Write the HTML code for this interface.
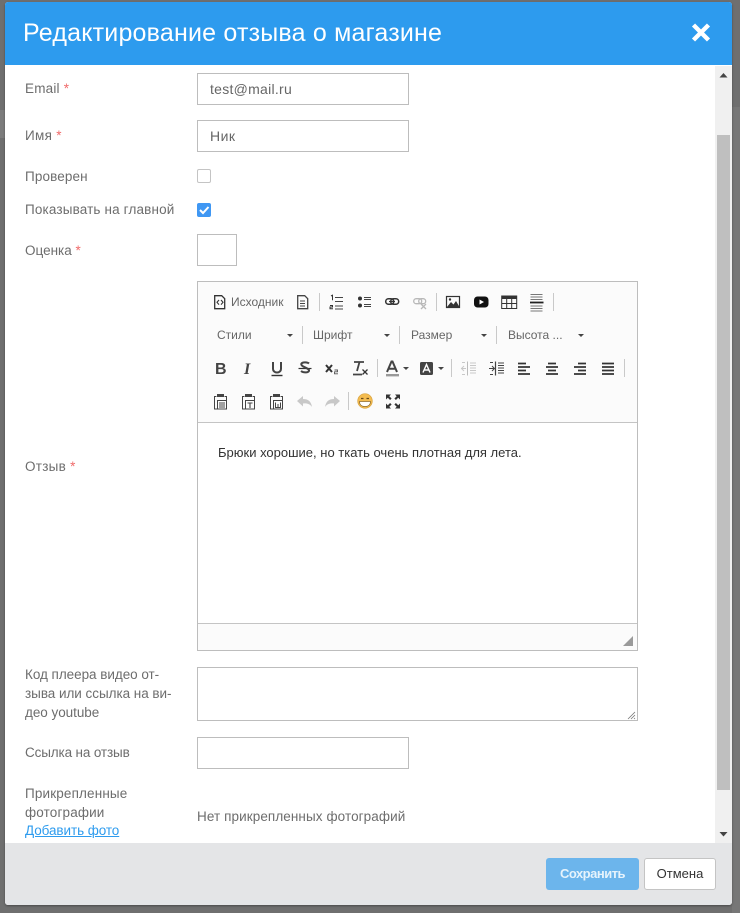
<!DOCTYPE html>
<html lang="ru"><head><meta charset="utf-8"><title>Редактирование отзыва</title>
<style>
html,body{margin:0;padding:0}
body{width:740px;height:913px;overflow:hidden;background:#6f6f6f;position:relative;font-family:"Liberation Sans",sans-serif}
.a{position:absolute}
.t{position:absolute;white-space:nowrap;font-size:13.5px;color:#6d6d6d;letter-spacing:.1px;line-height:18px}
.s{color:#f06a6a}
.i{position:absolute;box-sizing:border-box;background:#fff;border:1px solid #bdbdbd}
.v{position:absolute;white-space:nowrap;font-size:14px;color:#666;line-height:18px}
.c{position:absolute;white-space:nowrap;font-size:12px;color:#666;line-height:14px}
.sep{position:absolute;width:1px;height:18px;background:#c9c9c9}
.ar{position:absolute;width:0;height:0;border-left:3px solid transparent;border-right:3px solid transparent;border-top:3px solid #444}
svg{position:absolute;left:0;top:0}
</style></head><body>
<div class="a" style="left:0;top:110px;width:5px;height:28px;background:#7c7c7c"></div>
<div class="a" style="left:732px;top:107px;width:8px;height:806px;background:#777"></div>

<div class="a" style="left:5px;top:2px;width:727px;height:903px;background:#fff;border-radius:3px;box-shadow:0 1px 2px rgba(0,0,0,.35);overflow:hidden">
  <div class="a" style="left:0;top:0;width:727px;height:63px;background:#2d9bee"></div>
  <div class="a" style="left:0;top:841px;width:727px;height:62px;background:#e4e5e7"></div>
  <div class="a" style="left:710px;top:64px;width:17px;height:777px;background:#f0f0f0"></div>
  <div class="a" style="left:712px;top:133px;width:13px;height:655px;background:#bfbfbf"></div>
</div>
<div class="a" style="left:23px;top:19px;font-size:25px;line-height:28px;color:#fff;white-space:nowrap;letter-spacing:.2px">Редактирование отзыва о магазине</div>

<div class="t" style="left:25px;top:80px;letter-spacing:.2px">Email <span class="s">*</span></div>
<div class="i" style="left:197px;top:73px;width:212px;height:32px"></div>
<div class="v" style="left:210px;top:80px;letter-spacing:.27px">test@mail.ru</div>
<div class="t" style="left:25px;top:127px;letter-spacing:.3px">Имя <span class="s">*</span></div>
<div class="i" style="left:197px;top:120px;width:212px;height:32px"></div>
<div class="v" style="left:210px;top:127px;letter-spacing:.5px">Ник</div>
<div class="t" style="left:25px;top:168px;letter-spacing:.13px">Проверен</div>
<div class="a" style="left:197px;top:169px;width:14px;height:14px;box-sizing:border-box;border:1px solid #c4c4c4;border-radius:2px;background:#fff"></div>
<div class="t" style="left:25px;top:201px;letter-spacing:.15px">Показывать на главной</div>
<div class="a" style="left:197px;top:203px;width:14px;height:14px;border-radius:2px;background:#3f97f3"></div>
<div class="t" style="left:25px;top:242px;letter-spacing:0">Оценка <span class="s">*</span></div>
<div class="i" style="left:197px;top:234px;width:40px;height:32px"></div>
<div class="t" style="left:25px;top:458px;letter-spacing:.26px">Отзыв <span class="s">*</span></div>

<div class="i" style="left:197px;top:281px;width:441px;height:370px"></div>
<div class="a" style="left:198px;top:282px;width:439px;height:140px;background:#fbfbfb"></div>
<div class="a" style="left:198px;top:422px;width:439px;height:1px;background:#c4c4c4"></div>
<div class="a" style="left:198px;top:623px;width:439px;height:1px;background:#c4c4c4"></div>
<div class="a" style="left:198px;top:624px;width:439px;height:26px;background:#fbfbfb"></div>

<div class="c" style="left:231px;top:295px">Исходник</div>
<div class="c" style="left:217px;top:328px">Стили</div>
<div class="c" style="left:313px;top:328px">Шрифт</div>
<div class="c" style="left:411px;top:328px">Размер</div>
<div class="c" style="left:508px;top:328px">Высота ...</div>
<div class="ar" style="left:287px;top:334px"></div>
<div class="ar" style="left:384px;top:334px"></div>
<div class="ar" style="left:481px;top:334px"></div>
<div class="ar" style="left:578px;top:334px"></div>
<div class="ar" style="left:403px;top:367px"></div>
<div class="ar" style="left:438px;top:367px"></div>
<div class="sep" style="left:319px;top:293px"></div>
<div class="sep" style="left:436px;top:293px"></div>
<div class="sep" style="left:553px;top:293px"></div>
<div class="sep" style="left:302px;top:326px"></div>
<div class="sep" style="left:399px;top:326px"></div>
<div class="sep" style="left:496px;top:326px"></div>
<div class="sep" style="left:377px;top:359px"></div>
<div class="sep" style="left:451px;top:359px"></div>
<div class="sep" style="left:624px;top:359px"></div>
<div class="sep" style="left:348px;top:392px"></div>

<svg width="740" height="913" viewBox="0 0 740 913" fill="none">
<path d="M693.500 25l15 15M708.500 25l-15 15" stroke="#fff" stroke-width="4.400"/>
<path d="M719.500 77.500h8l-4-4.500z" fill="#444"/>
<path d="M719.500 832h8l-4 4.500z" fill="#444"/>
<path d="M200 210l3 3 5.500-6" stroke="#fff" stroke-width="2"/>
<g stroke="#333" stroke-width="1.300">
<path d="M214.700 295.700h7l3 3v10h-10z"/><path d="M219 300l-2 2.300 2 2.300M221 300l2 2.300-2 2.300" stroke-width="1.100"/>
<path d="M297.700 295.700h7l3 3v10h-10z" stroke="#444"/><path d="M300 301h5M300 303.500h5M300 306h5" stroke="#444" stroke-width="1"/>
<path d="M335 297.500h8M335 301.500h8M335 306h8M335 309h8" stroke="#444" stroke-width="1"/>
<path d="M331 296l1.500-.8v5" stroke-width="1"/><path d="M330 305.500h2.500v1.500h-2.500v1.800h3" stroke-width="1"/>
<circle cx="360" cy="298.500" r="2" fill="#333" stroke="none"/><circle cx="360" cy="305.500" r="2" fill="#333" stroke="none"/>
<path d="M364 297.500h7M364 299.500h7M364 304.500h7M364 306.500h7" stroke="#444" stroke-width="1"/>
<rect x="385.700" y="298.700" width="8" height="5.600" rx="2.800" stroke="#333" stroke-width="1.500"/><rect x="390.700" y="298.700" width="8" height="5.600" rx="2.800" stroke="#333" stroke-width="1.500"/>
<path d="M389 301.500h6" stroke-width="1.200"/>
<g stroke="#b8b8b8"><rect x="413.700" y="298.700" width="8" height="5" rx="2.500"/><rect x="418.700" y="298.700" width="7" height="5" rx="2.500"/><path d="M421 304l5 5M426 304l-5 5"/></g>
<rect x="446.500" y="296.500" width="13" height="11" stroke-width="1.200"/>
<path d="M447 307l4-5 2.500 2.500 2.500-3.500 3.500 6z" fill="#333" stroke="none"/><circle cx="450" cy="299.500" r="1.200" fill="#333" stroke="none"/>
<rect x="474" y="296.500" width="14.500" height="11" rx="3.500" fill="#111" stroke="none"/><path d="M479.500 299.500l4.500 2.500-4.500 2.500z" fill="#fff" stroke="none"/>
<rect x="501.700" y="296" width="15" height="12.500" stroke-width="1"/><rect x="501.500" y="295.500" width="15.500" height="3.500" fill="#333" stroke="none"/>
<path d="M506.700 299v9M511.700 299v9M502 303.500h15" stroke-width="1"/>
<path d="M530.500 294.500h12M530.500 297h12M530.500 299.500h12M530.500 306h12M530.500 308.500h12M530.500 311h12" stroke="#777" stroke-width="1"/>
<path d="M530 302.500h13.500" stroke="#222" stroke-width="1.800"/>

<path d="M271.500 375.500h11" stroke-width="1.400"/>
<path d="M273 362v7a4 3.500 0 0 0 8 0v-7" stroke="#444" stroke-width="2"/>
<path d="M298.500 368.500h13" stroke-width="1.200"/>
<path d="M309 363.500c-1-1-6-2-7.500 0-1.500 3 6 4 7.500 6.500 .5 3-5.500 3-8 1" stroke="#444" stroke-width="2"/>
<path d="M326 365l6 7M332 365l-6 7" stroke-width="2"/>
<path d="M334.500 370h3v1.800h-3v2h3.500" stroke="#555" stroke-width=".9"/>
<path d="M354 362h10M359.500 362l-2.500 9M353 374.500h9" stroke="#444" stroke-width="1.800"/>
<path d="M362.500 369.500l5 5M367.500 369.500l-5 5" stroke-width="1.300"/>
<path d="M387 372l4.500-10.500h1L397 372M389 368.800h6.500" stroke="#444" stroke-width="2"/>
<rect x="386" y="374" width="13" height="2.400" fill="#999" stroke="none"/>
<rect x="420" y="362" width="13" height="13" rx="1.500" fill="#444" stroke="none"/>
<path d="M423 372.500l3.500-8 3.500 8M424.300 370h4.500" stroke="#fff" stroke-width="1.400"/>
<g stroke="#c8c8c8" stroke-width="1"><path d="M467.500 361.500v14" stroke="#bbb"/><path d="M470 363h6M470 365.500h6M470 368h6M470 370.500h6M470 373h6M461 368.500h5M464 366l-2.500 2.500 2.500 2.500M462 362.500h3M462 374.500h3"/></g>
<g stroke="#444" stroke-width="1"><path d="M495.500 361.500v14" stroke-width="1.200"/><path d="M498 363h6M498 365.500h6M498 368h6M498 370.500h6M498 373h6M489 368.500h5M492 366l2.500 2.500-2.500 2.500M490 362.500h3M490 374.500h3"/></g>
<g stroke="#333" stroke-width="1.800">
<path d="M518 363.500h8M518 367h12M518 370.500h8M518 374h12"/>
<path d="M548 363.500h8M546 367h12M548 370.500h8M546 374h12"/>
<path d="M578 363.500h8M574 367h12M578 370.500h8M574 374h12"/>
<path d="M602 363.500h12M602 367h12M602 370.500h12M602 374h12"/>
</g>
<g stroke="#444" stroke-width="1">
<path d="M216.500 396.500h-2v12.500h2.500M224.500 396.500h2v3.500"/><path d="M217.500 396.500v-2h6v2z" fill="#444"/><rect x="217.500" y="400.500" width="9" height="8.500" fill="#fbfbfb"/><path d="M219 403h6M219 405h6M219 407h6" stroke-width=".9"/>
<path d="M244.500 396.500h-2v12.500h2.500M252.500 396.500h2v3.500"/><path d="M245.500 396.500v-2h6v2z" fill="#444"/><rect x="245.500" y="400.500" width="9" height="8.500" fill="#fbfbfb"/><path d="M247.500 403h5M250 403v5" stroke-width="1.100"/>
<path d="M272.500 396.500h-2v12.500h2.500M280.500 396.500h2v3.500"/><path d="M273.500 396.500v-2h6v2z" fill="#444"/><rect x="273.500" y="400.500" width="9" height="8.500" fill="#fbfbfb"/><path d="M275.500 402.500v5h5v-5M278 404v3" stroke-width="1"/>
</g>
<path d="M297 401l6-5v3c5 0 8 2 9 8-2-3-5-4-9-3.500v3z" fill="#c8c8c8" stroke="none"/>
<path d="M340 401l-6-5v3c-5 0-8 2-9 8 2-3 5-4 9-3.500v3z" fill="#c8c8c8" stroke="none"/>
<circle cx="365" cy="401" r="7.300" fill="#f4bc50" stroke="#d9a440" stroke-width=".7"/>
<path d="M359.500 401.500h11c0 3.500-2.500 5-5.500 5s-5.500-1.500-5.500-5z" fill="#fff" stroke="#8a6a30" stroke-width=".7"/>
<path d="M361 398.500h2.500M366.500 398.500h2.500" stroke="#6a4a1a" stroke-width="1.200"/>
<g fill="#333" stroke="none">
<path d="M386 394.500h5l-1.700 1.700 2.300 2.300-1.500 1.500-2.300-2.300-1.800 1.800z"/>
<path d="M400 394.500h-5l1.700 1.700-2.300 2.300 1.500 1.500 2.300-2.300 1.800 1.800z"/>
<path d="M386 408.500h5l-1.700-1.700 2.300-2.300-1.500-1.500-2.300 2.300-1.800-1.800z"/>
<path d="M400 408.500h-5l1.700-1.700-2.300-2.300 1.500-1.500 2.300 2.300 1.800-1.800z"/>
</g>
</g>
<text x="215" y="374" font-family="Liberation Sans" font-size="16" font-weight="700" fill="#444">B</text>
<text x="244" y="374" font-family="Liberation Serif" font-size="16" font-style="italic" font-weight="700" fill="#444">I</text>
<path d="M623 646h10v-10z" fill="#9a9a9a"/>
</svg>

<div class="a" style="left:218px;top:445px;font-size:13px;line-height:16px;color:#333;white-space:nowrap">Брюки хорошие, но ткать очень плотная для лета.</div>

<div class="t" style="left:25px;top:665px;line-height:19px;letter-spacing:-.04px">Код плеера видео от-<br>зыва или ссылка на ви-<br>део youtube</div>
<div class="i" style="left:197px;top:667px;width:441px;height:54px"></div>
<svg width="740" height="913" viewBox="0 0 740 913" fill="none"><path d="M628 719l7-7M631 719l4-4M634 719l1-1" stroke="#777" stroke-width=".8"/></svg>
<div class="t" style="left:25px;top:744px;letter-spacing:-.14px">Ссылка на отзыв</div>
<div class="i" style="left:197px;top:737px;width:212px;height:32px"></div>
<div class="t" style="left:25px;top:785px;line-height:18.500px;letter-spacing:.15px">Прикрепленные<br>фотографии<br><span style="color:#2d9bee;text-decoration:underline;letter-spacing:-.08px">Добавить фото</span></div>
<div class="t" style="left:197px;top:808px;letter-spacing:.09px">Нет прикрепленных фотографий</div>

<div class="a" style="left:546px;top:858px;width:93px;height:32px;border-radius:3px;background:#6cb5ec;color:#e6f3fc;font-size:13px;font-weight:700;line-height:32px;text-align:center;letter-spacing:-.5px">Сохранить</div>
<div class="a" style="left:644px;top:858px;width:72px;height:32px;box-sizing:border-box;border:1px solid #c4c4c4;border-radius:3px;background:#fff;color:#333;font-size:13px;line-height:30px;text-align:center">Отмена</div>
</body></html>
